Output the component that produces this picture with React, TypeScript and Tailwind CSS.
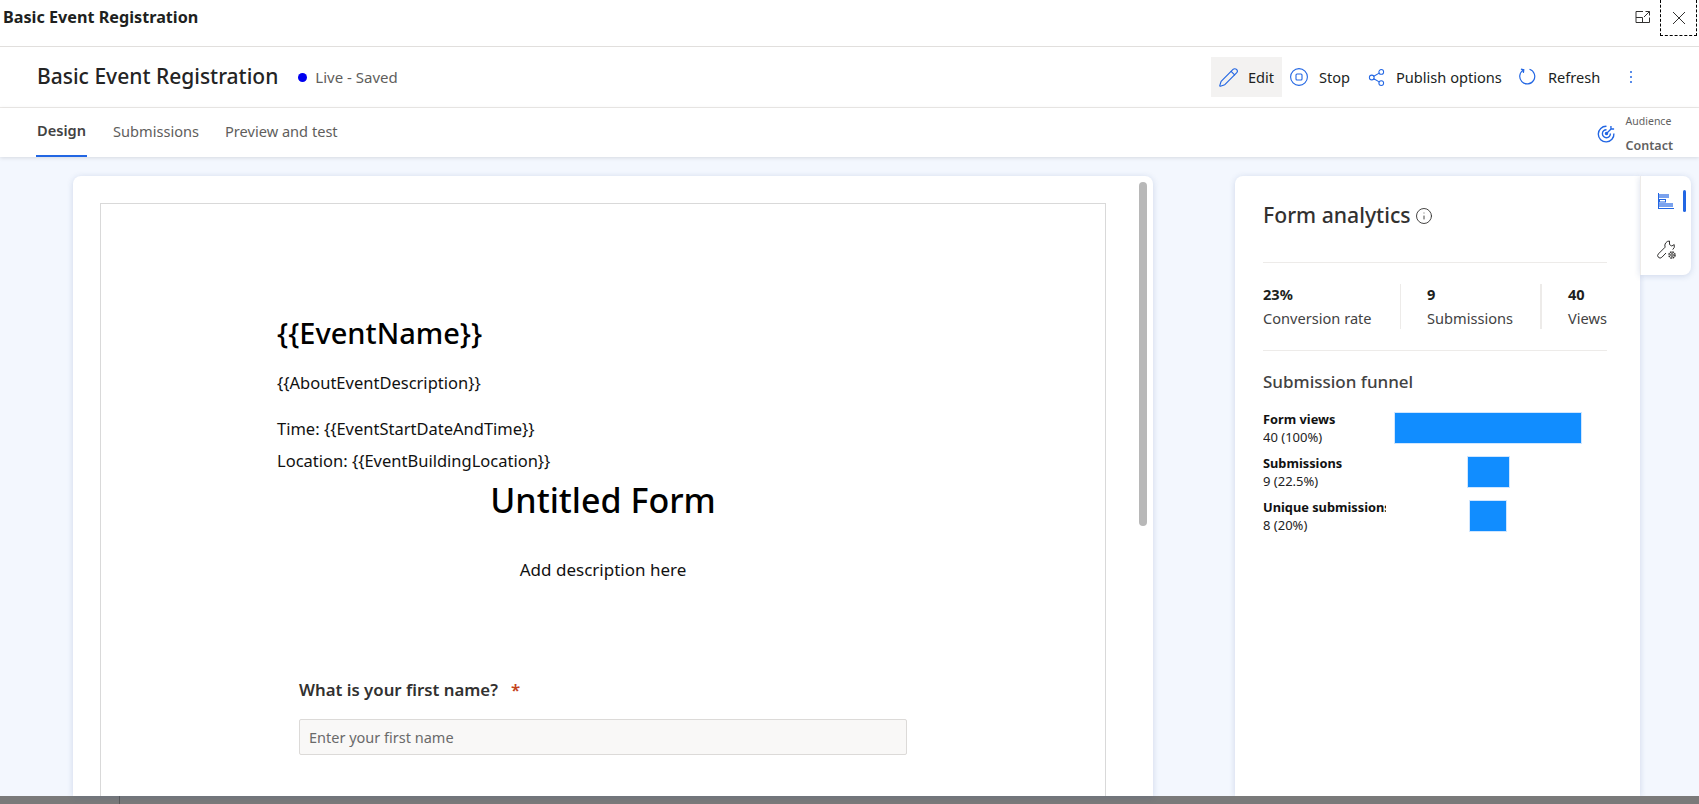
import { Info, Pencil, Share2 } from 'lucide-react'

const FUNNEL = [
  { label: 'Form views', value: '40 (100%)', width: 188 },
  { label: 'Submissions', value: '9 (22.5%)', width: 43 },
  { label: 'Unique submissions', value: '8 (20%)', width: 38 },
]

const STATS = [
  { value: '23%', label: 'Conversion rate', cls: 'w-[137px]' },
  { value: '9', label: 'Submissions', cls: 'w-[140px] border-l border-[#edebe9] pl-[26px]' },
  { value: '40', label: 'Views', cls: 'flex-1 border-l-2 border-[#edebe9] pl-[26px]' },
]

function PopoutIcon() {
  return (
    <svg width="16" height="14" viewBox="0 0 16 14" fill="none" stroke="#323130" strokeWidth="1">
      <path d="M8 1.5H1v11h13.5V7.5M1 7.5h6.5v5" />
      <path d="M9 7l5.5-5.5M10.5 1.5h4v4" />
    </svg>
  )
}

function CloseIcon() {
  return (
    <svg width="14" height="14" viewBox="0 0 14 14" stroke="#323130" strokeWidth="1">
      <path d="M1 1l12 12M13 1L1 13" />
    </svg>
  )
}

function StopIcon() {
  return (
    <svg width="18" height="18" viewBox="0 0 18 18" fill="none" stroke="#2266e3" strokeWidth="1.1">
      <circle cx="9" cy="9" r="8.4" />
      <rect x="6" y="6" width="6" height="6" rx="1" />
    </svg>
  )
}

function RefreshIcon() {
  return (
    <svg width="17" height="17" viewBox="0 0 17 17" fill="none" stroke="#2266e3" strokeWidth="1.2">
      <path d="M4.6 1.9A7.5 7.5 0 1 0 10.5 1.3" />
      <path d="M1.9 1.2l2.9.6-.4 3" />
    </svg>
  )
}

function DotsIcon() {
  return (
    <svg width="4" height="14" viewBox="0 0 4 14" fill="#2266e3">
      <circle cx="2" cy="2" r="1" />
      <circle cx="2" cy="7" r="1" />
      <circle cx="2" cy="12" r="1" />
    </svg>
  )
}

function TargetIcon() {
  return (
    <svg width="19" height="19" viewBox="0 0 18 18" fill="none" stroke="#2266e3" strokeWidth="1.3">
      <path d="M9 2.2A7.4 7.4 0 1 0 16 9" />
      <path d="M9 5.4A3.8 3.8 0 1 0 12.7 9" />
      <circle cx="9" cy="9" r="1" fill="#2266e3" />
      <path d="M9 9l5-5M13.2 1.8v2.9h3" />
    </svg>
  )
}

function ChartIcon() {
  return (
    <svg width="16" height="16" viewBox="0 0 16 16">
      <path d="M0 0h1v15h15v1H0z" fill="#2266e3" />
      <rect x="1" y="1" width="10" height="4" fill="#7aa2ee" />
      <rect x="1.5" y="6.5" width="6" height="2.5" fill="#fff" stroke="#2266e3" strokeWidth="1" />
      <rect x="1" y="10" width="14" height="4" fill="#7aa2ee" />
    </svg>
  )
}

function WrenchIcon() {
  return (
    <svg width="20" height="20" viewBox="0 0 20 20" fill="none" stroke="#323130" strokeWidth="1">
      <path d="M12.5 1a4.6 4.6 0 0 0-4.4 6.2L1.4 13.9a2.4 2.4 0 0 0 3.4 3.4L9 13" />
      <path d="M12.5 1v3.6l2.3 1.4 2.4-1.4a4.6 4.6 0 0 1-1.5 5" />
      <circle cx="15" cy="15" r="1.3" />
      <circle cx="15" cy="15" r="3" strokeDasharray="1.6 .75" strokeWidth="1.5" />
    </svg>
  )
}

function ActionButton({ icon, label, cls }: { icon: React.ReactNode; label: string; cls: string }) {
  return (
    <div className={`flex items-center h-10 ${cls}`}>
      {icon}
      <span className="pt-[2px]">{label}</span>
    </div>
  )
}

export default function App() {
  return (
    <div className="h-[804px] flex flex-col overflow-hidden bg-[#f3f7fe] font-['Noto_Sans','Open_Sans',sans-serif] text-[#242424]">
      <div className="h-[47px] shrink-0 bg-white border-b border-[#e1dfdd] flex items-center justify-between">
        <div className="pl-[3px] pb-[11px] text-[16.2px] font-bold text-[#201f1e]">Basic Event Registration</div>
        <div className="flex items-start self-start">
          <div className="mt-[10px] mr-[9px]"><PopoutIcon /></div>
          <div className="w-[37px] h-[36px] mr-[2px] border border-dashed border-black border-t-0 flex items-center justify-center"><CloseIcon /></div>
        </div>
      </div>

      <div className="h-[61px] shrink-0 bg-white border-b border-[#edebe9] flex items-center justify-between pl-[37px] pr-[66px]">
        <div className="flex items-center">
          <span className="text-[21px] font-medium text-[#242424]">Basic Event Registration</span>
          <span className="ml-[20px] w-[9px] h-[9px] rounded-full bg-[#0000f0]" />
          <span className="ml-[8px] text-[15px] text-[#605e5c]">Live - Saved</span>
        </div>
        <div className="flex items-center text-[14.6px] text-[#201f1e]">
          <ActionButton icon={<Pencil size={21} color="#2266e3" strokeWidth={1.3} className="mr-[9px]" />} label="Edit" cls="w-[71px] pl-[7px] bg-[#f3f2f1]" />
          <ActionButton icon={<span className="mr-[11px]"><StopIcon /></span>} label="Stop" cls="ml-[8px] w-[79px]" />
          <ActionButton icon={<Share2 size={19} color="#2266e3" strokeWidth={1.3} className="-ml-[2px] mr-[10px]" />} label="Publish options" cls="w-[150px]" />
          <ActionButton icon={<span className="mr-[12px] -mt-[1px]"><RefreshIcon /></span>} label="Refresh" cls="w-[110px]" />
          <DotsIcon />
        </div>
      </div>

      <div className="h-[49px] shrink-0 bg-white shadow-[0_1px_4px_rgba(0,0,0,0.12)] flex justify-between pl-[36px] pr-[26px] relative">
        <div className="flex gap-[26px] text-[14.6px] text-[#605e5c]">
          <div className="h-full flex items-center border-b-2 border-[#2266e3] font-semibold text-[#424242] px-[1px] pb-1 pt-[2px]">Design</div>
          <div className="flex items-center pb-[2px]">Submissions</div>
          <div className="flex items-center pb-[2px]">Preview and test</div>
        </div>
        <div className="flex items-center gap-[10px] pt-[2px]">
          <TargetIcon />
          <div className="flex flex-col">
            <span className="text-[10.5px] leading-[14px] text-[#616161]">Audience</span>
            <span className="mt-[10px] text-[12.5px] leading-[16px] font-semibold text-[#616161]">Contact</span>
          </div>
        </div>
      </div>

      <div className="flex-1 min-h-0 flex pt-[19px] pl-[73px]">
        <div className="w-[1080px] bg-white rounded-t-lg shadow-[0_1px_6px_rgba(40,70,140,0.18)] pl-[27px] pt-[27px] flex relative">
          <div className="w-[1006px] border border-[#d9d9d9] border-b-0">
            <div className="w-[652px] mx-auto pt-[110px]">
              <div className="text-[29px] leading-[38px] font-medium text-black">{'{{EventName}}'}</div>
              <div className="mt-[19px] text-[16.5px] leading-[24px] text-[#111]">{'{{AboutEventDescription}}'}</div>
              <div className="mt-[22px] text-[16.5px] leading-[24px] text-[#111]">{'Time: {{EventStartDateAndTime}}'}</div>
              <div className="mt-[8px] text-[16.5px] leading-[24px] text-[#111]">{'Location: {{EventBuildingLocation}}'}</div>
              <div className="mt-[2px] text-center text-[34px] leading-[50px] font-medium text-black">Untitled Form</div>
              <div className="mt-[33px] text-center text-[17px] leading-[24px] text-[#111]">Add description here</div>
              <div className="mt-[96px] ml-[22px] text-[16.8px] leading-[24px] font-semibold text-[#323130]">
                What is your first name?<span className="ml-[13px] text-[#c4421a]">*</span>
              </div>
              <div className="mt-[17px] mx-[22px] h-[36px] rounded-[2px] border border-[#dcdad8] bg-[#f9f8f7] pl-[9px] pt-[2px] flex items-center text-[14.5px] text-[#6a6a6a]">
                Enter your first name
              </div>
            </div>
          </div>
          <div className="absolute left-[1066px] top-[6px] w-2 h-[344px] rounded-full bg-[#b8b8b8]" />
        </div>

        <div className="ml-[82px] w-[405px] bg-white rounded-tl-lg shadow-[0_1px_6px_rgba(40,70,140,0.18)] pl-[28px] pr-[33px] pt-[21px]">
          <div className="flex items-center h-[36px]">
            <span className="text-[21.2px] font-medium text-[#323130]">Form analytics</span>
            <Info size={18} strokeWidth={1.2} color="#323130" className="ml-[4px] mt-[2px]" />
          </div>
          <div className="mt-[29px] border-t border-[#edebe9]" />
          <div className="mt-[21px] flex h-[45px] overflow-hidden">
            {STATS.map(s => (
              <div key={s.label} className={`whitespace-nowrap ${s.cls}`}>
                <div className="text-[14.6px] leading-[20px] font-bold text-[#201f1e]">{s.value}</div>
                <div className="mt-[4px] text-[14.6px] leading-[20px] text-[#424242]">{s.label}</div>
              </div>
            ))}
          </div>
          <div className="mt-[21px] border-t border-[#edebe9]" />
          <div className="mt-[19px] text-[17px] leading-[24px] font-medium text-[#424242]">Submission funnel</div>
          <div className="mt-[18px] flex flex-col gap-[12px]">
            {FUNNEL.map(f => (
              <div key={f.label} className="flex items-center h-[32px]">
                <div className="w-[123px] overflow-hidden whitespace-nowrap">
                  <div className="text-[12.8px] leading-[18px] font-bold text-[#111]">{f.label}</div>
                  <div className="text-[13px] leading-[18px] text-[#222]">{f.value}</div>
                </div>
                <div className="ml-[8px] w-[188px] flex justify-center">
                  <div className="h-[32px] bg-[#118dff] border border-[#cfe6ff]" style={{ width: f.width }} />
                </div>
              </div>
            ))}
          </div>
        </div>

        <div className="w-[51px] h-[99px] bg-white rounded-r-lg border-l border-[#edebe9] shadow-[0_1px_6px_rgba(40,70,140,0.18)] flex flex-col items-start pt-[17px] pl-[17px] relative">
          <ChartIcon />
          <div className="absolute right-[5px] top-[14px] w-[3px] h-[22px] rounded-sm bg-[#2266e3]" />
          <div className="mt-[31px] -ml-[1px]"><WrenchIcon /></div>
        </div>
      </div>

      <div className="h-2 shrink-0 bg-[#7a7a7a] flex">
        <div className="w-[120px] border-r border-[#5a5a5a]" />
      </div>
    </div>
  )
}
